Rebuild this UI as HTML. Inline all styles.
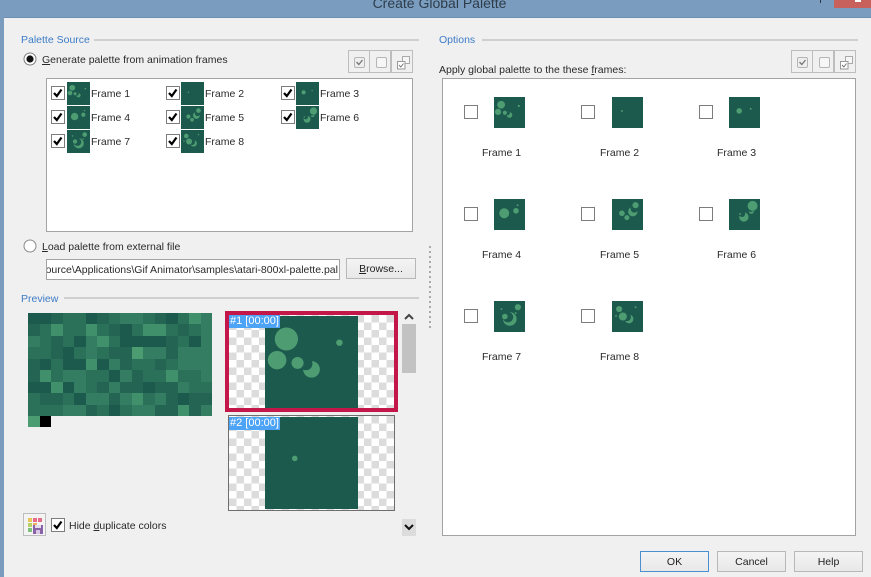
<!DOCTYPE html>
<html><head><meta charset="utf-8"><style>
html,body{margin:0;padding:0}
body{width:871px;height:577px;overflow:hidden;position:relative;background:#f0f0f0;font:10.5px/14px "Liberation Sans",sans-serif;color:#2a2a2a;filter:blur(.35px)}
body>*,.a0{position:absolute}
.t{white-space:nowrap}
.g{color:#3d7cc6}
.ln{height:2px;background:#cfcfcf}
.box{background:#fff;border:1px solid #a3a3a3;box-sizing:border-box}
.cb{width:14px;height:14px;background:#fff;border:1px solid #7d7d7d;box-sizing:border-box}
.tb{width:22px;height:23px;border:1px solid #bdbdbd;box-sizing:border-box;background:#f0f0f0}
.btn{box-sizing:border-box;border:1px solid #b8b8b8;background:linear-gradient(#f4f4f4,#e8e8e8);text-align:center;height:21px;line-height:20px;color:#222}
.ck{background:repeating-conic-gradient(#dcdcdc 0 25%,#fff 0 50%) 0 0/15px 15px}
.tag{background:#4da3f5;color:#fff;height:13px;line-height:13px;padding:0 1px;font-size:11px}
#pal{left:28px;top:313px;width:184px;display:grid;grid-template-columns:repeat(16,11.5px);grid-auto-rows:11.44px}
#pal i{display:block}
.a{background:#1b5a4d}.b{background:#236552}.c{background:#2b7059}.d{background:#347d62}.e{background:#41906c}.f{background:#4c9c72}.k{background:#000}
u{text-decoration:underline}
</style></head><body>
<svg width="0" height="0" style="position:absolute"><defs>
<g id="f1"><rect width="100" height="100" fill="#1d5a4e"/><circle cx="50" cy="58" r="9" fill="#4e9d72"/><circle cx="44" cy="52" r="7" fill="#1d5a4e"/><g fill="#4e9d72"><circle cx="23" cy="25" r="12.5"/><circle cx="13" cy="48" r="10"/><circle cx="35" cy="51" r="6.5"/><circle cx="80" cy="29" r="3.5"/></g></g>
<g id="f2"><rect width="100" height="100" fill="#1d5a4e"/><circle cx="32" cy="45" r="3" fill="#4e9d72"/></g>
<g id="f3"><rect width="100" height="100" fill="#1d5a4e"/><g fill="#4e9d72"><circle cx="33" cy="45" r="9"/><circle cx="70" cy="38" r="3"/></g></g>
<g id="f4"><rect width="100" height="100" fill="#1d5a4e"/><g fill="#4e9d72"><circle cx="33" cy="46" r="16"/><circle cx="71" cy="38" r="9"/><circle cx="76" cy="20" r="3"/></g></g>
<g id="f5"><rect width="100" height="100" fill="#1d5a4e"/><g fill="#4e9d72"><circle cx="32" cy="46" r="9"/><circle cx="48" cy="60" r="8"/><circle cx="67" cy="41" r="15"/></g><circle cx="72" cy="32" r="12" fill="#1d5a4e"/><circle cx="76" cy="20" r="10" fill="#4e9d72"/></g>
<g id="f6"><rect width="100" height="100" fill="#1d5a4e"/><g fill="#4e9d72"><circle cx="48" cy="58" r="15"/><circle cx="72" cy="40" r="8"/></g><circle cx="42" cy="48" r="10" fill="#1d5a4e"/><circle cx="70" cy="32" r="10" fill="#1d5a4e"/><g fill="#4e9d72"><circle cx="76" cy="22" r="16"/><circle cx="36" cy="48" r="3"/></g></g>
<g id="f7"><rect width="100" height="100" fill="#1d5a4e"/><circle cx="51" cy="58" r="22" fill="#4e9d72"/><circle cx="45" cy="52" r="17" fill="#1d5a4e"/><g fill="#4e9d72"><circle cx="35" cy="50" r="9"/><circle cx="77" cy="20" r="10"/><circle cx="24" cy="26" r="3"/><circle cx="70" cy="39" r="3"/></g></g>
<g id="f8"><rect width="100" height="100" fill="#1d5a4e"/><circle cx="55" cy="58" r="14" fill="#4e9d72"/><circle cx="48" cy="52" r="13" fill="#1d5a4e"/><g fill="#4e9d72"><circle cx="23" cy="26" r="10"/><circle cx="35" cy="50" r="13"/><circle cx="13" cy="48" r="3"/><circle cx="76" cy="20" r="3"/></g></g>
<path id="chk" d="M2.5 6.5 L5.3 9.5 L10 3" fill="none" stroke="#000" stroke-width="2.2"/>
<g id="tb1"><rect x=".5" y=".5" width="10" height="10" rx="1.5" fill="#eee" stroke="#b5b5b5"/><path d="M2.5 5 L4.8 7.5 L8.5 3" fill="none" stroke="#777" stroke-width="1.3"/></g>
<g id="tb2"><rect x=".5" y=".5" width="10" height="10" rx="1.5" fill="#f6f6f6" stroke="#b5b5b5"/></g>
<g id="tb3"><rect x="5.5" y=".5" width="7" height="7" fill="#f6f6f6" stroke="#aaa"/><rect x=".5" y="5.5" width="7.5" height="7.5" fill="#fff" stroke="#999"/><path d="M2 9 L3.8 11 L6.5 7.5" fill="none" stroke="#777"/></g>
</defs></svg>

<!-- title bar -->
<div style="left:0;top:0;width:871px;height:18px;background:#7a9dbf"></div>
<div style="left:0;top:17px;width:871px;height:1px;background:#6b8fb2"></div>
<div style="left:0;top:0;width:4px;height:577px;background:#7a9dbf"></div>
<div class="t" style="left:0;top:-5px;width:879px;text-align:center;font-size:14px;line-height:17px;color:#2e3c4a">Create Global Palette</div>
<div style="left:834px;top:0;width:37px;height:8px;background:#c8605c"></div>
<div style="left:820px;top:0;width:1px;height:3px;background:#334"></div>
<div style="left:855px;top:0;width:6px;height:2px;background:#fff"></div>

<!-- Palette source -->
<div class="t g" style="left:21px;top:33px">Palette Source</div>
<div class="ln" style="left:94px;top:39px;width:325px"></div>
<svg style="left:23px;top:52px" width="14" height="14"><circle cx="7" cy="7" r="6" fill="#fff" stroke="#7d7d7d"/><circle cx="7" cy="7" r="3.6" fill="#111"/></svg>
<div class="t" style="left:42px;top:53px"><u>G</u>enerate palette from animation frames</div>

<div class="tb" style="left:348px;top:50px"></div><div class="tb" style="left:369px;top:50px"></div><div class="tb" style="left:391px;top:50px"></div>
<svg style="left:354px;top:57px" width="11" height="11"><use href="#tb1"/></svg>
<svg style="left:376px;top:57px" width="11" height="11"><use href="#tb2"/></svg>
<svg style="left:397px;top:56px" width="14" height="14"><use href="#tb3"/></svg>

<div class="box" style="left:46px;top:78px;width:367px;height:154px"></div>
<!-- list row items -->
<div class="cb" style="left:51px;top:86px"></div><svg style="left:51px;top:86px" width="14" height="14"><use href="#chk" x=".5" y=".5"/></svg>
<svg style="left:67px;top:82px" width="23" height="23" viewBox="0 0 100 100"><use href="#f1"/></svg><div class="t" style="left:91px;top:87px">Frame 1</div>
<div class="cb" style="left:166px;top:86px"></div><svg style="left:166px;top:86px" width="14" height="14"><use href="#chk" x=".5" y=".5"/></svg>
<svg style="left:181px;top:82px" width="23" height="23" viewBox="0 0 100 100"><use href="#f2"/></svg><div class="t" style="left:205px;top:87px">Frame 2</div>
<div class="cb" style="left:281px;top:86px"></div><svg style="left:281px;top:86px" width="14" height="14"><use href="#chk" x=".5" y=".5"/></svg>
<svg style="left:296px;top:82px" width="23" height="23" viewBox="0 0 100 100"><use href="#f3"/></svg><div class="t" style="left:320px;top:87px">Frame 3</div>

<div class="cb" style="left:51px;top:110px"></div><svg style="left:51px;top:110px" width="14" height="14"><use href="#chk" x=".5" y=".5"/></svg>
<svg style="left:67px;top:106px" width="23" height="23" viewBox="0 0 100 100"><use href="#f4"/></svg><div class="t" style="left:91px;top:111px">Frame 4</div>
<div class="cb" style="left:166px;top:110px"></div><svg style="left:166px;top:110px" width="14" height="14"><use href="#chk" x=".5" y=".5"/></svg>
<svg style="left:181px;top:106px" width="23" height="23" viewBox="0 0 100 100"><use href="#f5"/></svg><div class="t" style="left:205px;top:111px">Frame 5</div>
<div class="cb" style="left:281px;top:110px"></div><svg style="left:281px;top:110px" width="14" height="14"><use href="#chk" x=".5" y=".5"/></svg>
<svg style="left:296px;top:106px" width="23" height="23" viewBox="0 0 100 100"><use href="#f6"/></svg><div class="t" style="left:320px;top:111px">Frame 6</div>

<div class="cb" style="left:51px;top:134px"></div><svg style="left:51px;top:134px" width="14" height="14"><use href="#chk" x=".5" y=".5"/></svg>
<svg style="left:67px;top:130px" width="23" height="23" viewBox="0 0 100 100"><use href="#f7"/></svg><div class="t" style="left:91px;top:135px">Frame 7</div>
<div class="cb" style="left:166px;top:134px"></div><svg style="left:166px;top:134px" width="14" height="14"><use href="#chk" x=".5" y=".5"/></svg>
<svg style="left:181px;top:130px" width="23" height="23" viewBox="0 0 100 100"><use href="#f8"/></svg><div class="t" style="left:205px;top:135px">Frame 8</div>

<svg style="left:23px;top:239px" width="14" height="14"><circle cx="7" cy="7" r="6" fill="#fff" stroke="#8a8a8a"/></svg>
<div class="t" style="left:42px;top:240px"><u>L</u>oad palette from external file</div>
<div class="box" style="left:46px;top:259px;width:294px;height:21px;overflow:hidden"><div class="t" style="position:absolute;right:1px;top:3px">C:\Program Files\Resource\Applications\Gif Animator\samples\atari-800xl-palette.pal</div></div>
<div class="btn" style="left:346px;top:258px;width:70px"><u>B</u>rowse...</div>
<div style="left:429px;top:246px;width:2px;height:83px;background:repeating-linear-gradient(#aaa 0 2px,transparent 2px 5px)"></div>

<!-- preview -->
<div class="t g" style="left:21px;top:292px">Preview</div>
<div class="ln" style="left:64px;top:297px;width:355px"></div>
<div id="pal"><i class="a"></i><i class="a"></i><i class="b"></i><i class="c"></i><i class="c"></i><i class="a"></i><i class="b"></i><i class="c"></i><i class="d"></i><i class="d"></i><i class="c"></i><i class="b"></i><i class="a"></i><i class="c"></i><i class="e"></i><i class="d"></i>
<i class="b"></i><i class="c"></i><i class="e"></i><i class="c"></i><i class="c"></i><i class="e"></i><i class="c"></i><i class="b"></i><i class="a"></i><i class="c"></i><i class="e"></i><i class="e"></i><i class="c"></i><i class="b"></i><i class="c"></i><i class="d"></i>
<i class="d"></i><i class="c"></i><i class="b"></i><i class="c"></i><i class="a"></i><i class="d"></i><i class="e"></i><i class="c"></i><i class="a"></i><i class="a"></i><i class="a"></i><i class="a"></i><i class="b"></i><i class="c"></i><i class="a"></i><i class="d"></i>
<i class="c"></i><i class="c"></i><i class="b"></i><i class="a"></i><i class="c"></i><i class="d"></i><i class="c"></i><i class="b"></i><i class="b"></i><i class="f"></i><i class="d"></i><i class="d"></i><i class="b"></i><i class="d"></i><i class="d"></i><i class="d"></i>
<i class="b"></i><i class="a"></i><i class="c"></i><i class="a"></i><i class="a"></i><i class="e"></i><i class="a"></i><i class="d"></i><i class="b"></i><i class="c"></i><i class="c"></i><i class="b"></i><i class="c"></i><i class="d"></i><i class="d"></i><i class="d"></i>
<i class="b"></i><i class="e"></i><i class="c"></i><i class="d"></i><i class="d"></i><i class="c"></i><i class="c"></i><i class="a"></i><i class="d"></i><i class="b"></i><i class="c"></i><i class="c"></i><i class="e"></i><i class="c"></i><i class="c"></i><i class="d"></i>
<i class="a"></i><i class="a"></i><i class="e"></i><i class="a"></i><i class="d"></i><i class="c"></i><i class="b"></i><i class="d"></i><i class="b"></i><i class="b"></i><i class="a"></i><i class="b"></i><i class="b"></i><i class="d"></i><i class="c"></i><i class="c"></i>
<i class="c"></i><i class="b"></i><i class="b"></i><i class="c"></i><i class="a"></i><i class="d"></i><i class="d"></i><i class="b"></i><i class="d"></i><i class="e"></i><i class="c"></i><i class="d"></i><i class="b"></i><i class="a"></i><i class="b"></i><i class="b"></i>
<i class="c"></i><i class="c"></i><i class="c"></i><i class="d"></i><i class="d"></i><i class="b"></i><i class="c"></i><i class="a"></i><i class="c"></i><i class="d"></i><i class="d"></i><i class="b"></i><i class="b"></i><i class="e"></i><i class="b"></i><i class="d"></i>
<i class="f"></i><i class="k"></i></div>

<div class="ck" style="left:225px;top:311px;width:173px;height:101px;box-sizing:border-box;border:4px solid #c3174a;background-origin:padding-box"></div>
<svg style="left:265px;top:316px" width="93" height="92" viewBox="0 0 100 100" preserveAspectRatio="none"><use href="#f1"/></svg>
<div class="t tag" style="left:229px;top:315px">#1 [00:00]</div>
<div class="ck" style="left:228px;top:415px;width:167px;height:96px;box-sizing:border-box;border:1px solid #6e6e6e"></div>
<svg style="left:265px;top:417px" width="93" height="92" viewBox="0 0 100 100" preserveAspectRatio="none"><use href="#f2"/></svg>
<div class="t tag" style="left:229px;top:417px">#2 [00:00]</div>

<div style="left:402px;top:324px;width:14px;height:49px;background:#c2c2c2"></div>
<svg style="left:404px;top:313px" width="10" height="7"><path d="M1 6 L5 2 L9 6" fill="none" stroke="#444" stroke-width="2"/></svg>
<div style="left:402px;top:519px;width:14px;height:17px;background:#dcdcdc"></div>
<svg style="left:404px;top:524px" width="10" height="7"><path d="M1 1 L5 5 L9 1" fill="none" stroke="#111" stroke-width="2"/></svg>

<div class="box" style="left:23px;top:513px;width:23px;height:23px;border-color:#bdbdbd;background:#f4f4f4"></div>
<svg style="left:27px;top:517px" width="17" height="17"><rect x="1" y="1" width="4" height="4" fill="#e8c65a"/><rect x="6" y="1" width="4" height="4" fill="#e86a8a"/><rect x="11" y="1" width="4" height="4" fill="#e86a8a"/><rect x="1" y="6" width="4" height="4" fill="#b8d268"/><rect x="6" y="6" width="4" height="4" fill="#f2b060"/><rect x="1" y="11" width="4" height="4" fill="#7ec27e"/><rect x="6" y="8" width="10" height="9" fill="#8a62a8"/><rect x="8" y="8" width="6" height="3" fill="#e6dcef"/><rect x="9" y="13" width="4" height="4" fill="#d8c8e4"/></svg>
<div class="cb" style="left:51px;top:518px"></div><svg style="left:51px;top:518px" width="14" height="14"><use href="#chk" x=".5" y=".5"/></svg>
<div class="t" style="left:69px;top:519px">Hide <u>d</u>uplicate colors</div>

<!-- options -->
<div class="t g" style="left:439px;top:33px">Options</div>
<div class="ln" style="left:482px;top:39px;width:376px"></div>
<div class="tb" style="left:791px;top:50px"></div><div class="tb" style="left:812px;top:50px"></div><div class="tb" style="left:834px;top:50px"></div>
<svg style="left:797px;top:57px" width="11" height="11"><use href="#tb1"/></svg>
<svg style="left:819px;top:57px" width="11" height="11"><use href="#tb2"/></svg>
<svg style="left:840px;top:56px" width="14" height="14"><use href="#tb3"/></svg>
<div class="t" style="left:439px;top:63px">Apply global palette to the these <u>f</u>rames:</div>
<div class="box" style="left:442px;top:78px;width:414px;height:458px"></div>

<div class="cb" style="left:464px;top:105px"></div><svg style="left:494px;top:97px" width="31" height="31" viewBox="0 0 100 100"><use href="#f1"/></svg><div class="t" style="left:482px;top:146px">Frame 1</div>
<div class="cb" style="left:581px;top:105px"></div><svg style="left:612px;top:97px" width="31" height="31" viewBox="0 0 100 100"><use href="#f2"/></svg><div class="t" style="left:600px;top:146px">Frame 2</div>
<div class="cb" style="left:699px;top:105px"></div><svg style="left:729px;top:97px" width="31" height="31" viewBox="0 0 100 100"><use href="#f3"/></svg><div class="t" style="left:717px;top:146px">Frame 3</div>

<div class="cb" style="left:464px;top:207px"></div><svg style="left:494px;top:199px" width="31" height="31" viewBox="0 0 100 100"><use href="#f4"/></svg><div class="t" style="left:482px;top:248px">Frame 4</div>
<div class="cb" style="left:581px;top:207px"></div><svg style="left:612px;top:199px" width="31" height="31" viewBox="0 0 100 100"><use href="#f5"/></svg><div class="t" style="left:600px;top:248px">Frame 5</div>
<div class="cb" style="left:699px;top:207px"></div><svg style="left:729px;top:199px" width="31" height="31" viewBox="0 0 100 100"><use href="#f6"/></svg><div class="t" style="left:717px;top:248px">Frame 6</div>

<div class="cb" style="left:464px;top:309px"></div><svg style="left:494px;top:301px" width="31" height="31" viewBox="0 0 100 100"><use href="#f7"/></svg><div class="t" style="left:482px;top:350px">Frame 7</div>
<div class="cb" style="left:581px;top:309px"></div><svg style="left:612px;top:301px" width="31" height="31" viewBox="0 0 100 100"><use href="#f8"/></svg><div class="t" style="left:600px;top:350px">Frame 8</div>

<!-- buttons -->
<div class="btn" style="left:640px;top:551px;width:69px;border-color:#4a90d0">OK</div>
<div class="btn" style="left:717px;top:551px;width:69px">Cancel</div>
<div class="btn" style="left:794px;top:551px;width:69px">Help</div>
</body></html>
